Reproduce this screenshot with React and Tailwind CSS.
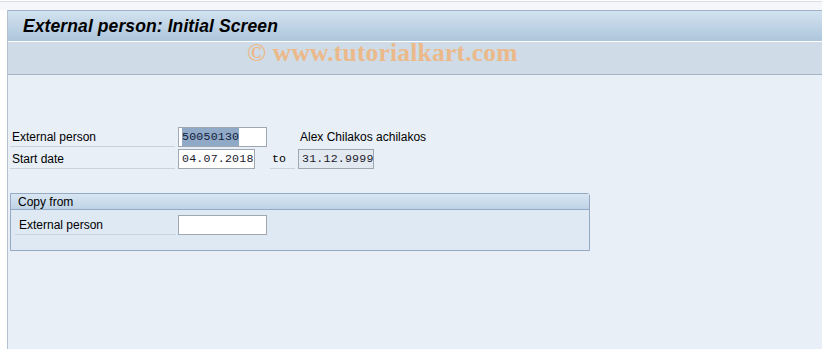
/* SAP GUI – External person: Initial Screen */

const sans = { fontFamily: '"Liberation Sans", Arial, sans-serif' };

function Label({ children, w = "w-[165px]" }) {
  return (
    <div className={`${w} h-[20px] flex items-center pl-[2px] border-b border-[#c9d3de] text-[12px] text-black`}>
      {children}
    </div>
  );
}

function Field({ w, children, readOnly }) {
  return (
    <div
      className={`${w} h-[20px] flex items-center px-[3px] border border-[#9ea7b2] font-['Liberation_Mono',monospace] text-[11.6px] tracking-[0.2px] text-[#1a1a2e] ${
        readOnly ? "bg-[#e3e9f0]" : "bg-white"
      }`}
    >
      {children}
    </div>
  );
}

export default function App() {
  return (
    <div className="w-[822px] h-[349px] bg-white overflow-hidden" style={sans}>
      {/* ── Top strip ── */}
      <div className="h-px bg-white" />
      <div className="h-px bg-[#dcdde0]" />
      <div className="h-[8px] bg-[#f6f7fb]" />

      <div className="ml-[7px] border-l border-[#b4c2d1] h-[339px] flex flex-col">
        {/* ── Title bar ── */}
        <div className="h-[31px] border-t border-[#9fb2c7] bg-gradient-to-b from-[#d2e2ef] to-[#adc6dc] flex items-center pl-[15px]">
          <span className="text-[17.5px] font-bold italic text-black tracking-[0.1px]">
            External person: Initial Screen
          </span>
        </div>
        <div className="h-px bg-white" />

        {/* ── Toolbar (watermark) ── */}
        <div className="h-[33px] bg-[#cfdce7] border-b border-[#a6b5c5] flex items-start pl-[239px]">
          <span className="font-['Liberation_Serif',serif] font-bold text-[25.5px] leading-[21px] text-[#ebb98a] tracking-[0.2px]">
            © www.tutorialkart.com
          </span>
        </div>

        {/* ── Body ── */}
        <div className="flex-1 bg-[#e8eff7] pt-[52px] pl-[2px]">
          <div className="flex items-center h-[20px]">
            <Label>External person</Label>
            <div className="ml-[3px]">
              <Field w="w-[89px]">
                <span className="bg-[#8fa9c6] text-[#10203a]">50050130</span>
              </Field>
            </div>
            <span className="ml-[33px] text-[12px] text-black">Alex Chilakos achilakos</span>
          </div>

          <div className="flex items-center h-[20px] mt-[2px]">
            <Label>Start date</Label>
            <div className="ml-[3px]">
              <Field w="w-[77px]">04.07.2018</Field>
            </div>
            <div className="ml-[15px] w-[25px] h-[20px] flex items-center pl-[2px] border-b border-[#c9d3de] font-['Liberation_Mono',monospace] text-[11.6px] text-black">
              to
            </div>
            <div className="ml-[3px]">
              <Field w="w-[76px]" readOnly>31.12.9999</Field>
            </div>
          </div>

          {/* ── Copy from group ── */}
          <div className="mt-[24px] w-[580px] h-[58px] border border-[#93a9c4] rounded-tr-[3px] bg-[#dee9f3]">
            <div className="h-[16px] bg-gradient-to-b from-[#d9e6f2] to-[#bfd3e7] border-b border-[#93a9c4] flex items-center pl-[7px] text-[12px] text-black">
              Copy from
            </div>
            <div className="flex items-center h-[20px] mt-[5px] pl-[4px]">
              <Label w="w-[161px]"><span className="pl-[2px]">External person</span></Label>
              <div className="ml-[2px]">
                <Field w="w-[89px]" />
              </div>
            </div>
          </div>
        </div>
      </div>
    </div>
  );
}
